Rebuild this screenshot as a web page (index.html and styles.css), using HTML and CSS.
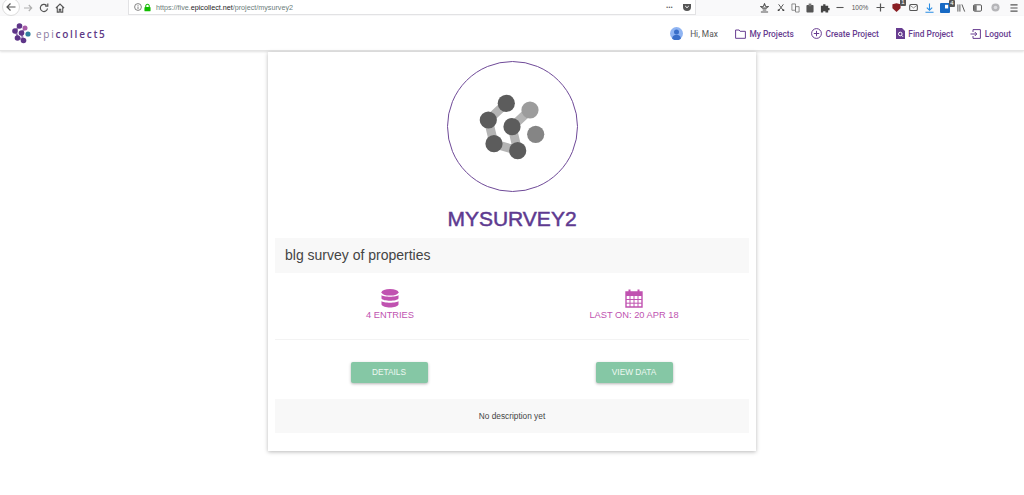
FILE: index.html
```html
<!DOCTYPE html>
<html lang="en">
<head>
<meta charset="utf-8">
<title>MYSURVEY2 - Epicollect5</title>
<link rel="stylesheet" href="styles.css">
</head>
<body>
<div class="browser">
  <div class="browser-nav">
    <span class="back"><svg width="12" height="12" viewBox="0 0 12 12"><path d="M10.500 6H2M5.500 2.500 2 6l3.500 3.500" class="ic"/></svg></span>
    <svg class="fwd" width="10" height="10" viewBox="0 0 10 10"><path d="M1 5h7.500M5.800 2 8.700 5 5.800 8" class="ic faint"/></svg>
    <svg class="reload" width="10" height="10" viewBox="0 0 10 10"><path d="M8.500 5.500A3.600 3.600 0 1 1 7.400 2.300M8.800 .6v2.600H6.200" class="ic"/></svg>
    <svg class="home" width="10" height="10" viewBox="0 0 11 11"><path d="M1 5.500 5.500 1.200 10 5.500M2.500 4.500v5.500h2.200V7h1.600v3h2.200V4.500" class="ic"/></svg>
  </div>
  <div class="urlbar">
    <svg width="8" height="8" viewBox="0 0 8 8"><circle cx="4" cy="4" r="3.400" class="ic thin"/><path d="M4 3.500v2.500M4 2v.8" class="ic thin"/></svg>
    <svg class="lock" width="7" height="9" viewBox="0 0 8 9"><path d="M2 4V2.800a2 2 0 0 1 4 0V4" fill="none" stroke="#12bc00" stroke-width="1.200"/><rect x=".5" y="3.800" width="7" height="5" rx="1" fill="#12bc00"/></svg>
    <span class="url">https://five.<b>epicollect.net</b>/project/mysurvey2</span>
    <span class="url-end">
      <span class="dots">•••</span>
      <svg width="10" height="9" viewBox="0 0 10 9"><path d="M1 1h8v3a4 4 0 0 1-8 0z" fill="#555"/><path d="M3.200 3 5 4.700 6.800 3" fill="none" stroke="#fff"/></svg>
    </span>
  </div>
  <div class="tools">
    <svg width="9" height="10" viewBox="0 0 10 11"><path d="M5 .8 6.200 3.500 9 3.800 7 5.600H3L1 3.800 3.800 3.500zM1 10h8M3 7.700h4" class="ic"/></svg>
    <svg width="8" height="9" viewBox="0 0 10 10"><path d="M2 1 8 9M8 1 2 9" class="ic"/><circle cx="2" cy="8.300" r="1.200" fill="#444"/><circle cx="8" cy="8.300" r="1.200" fill="#444"/></svg>
    <svg width="9" height="10" viewBox="0 0 10 11"><path d="M1 1h4v7H1zM5 4h4v6H5z" class="ic thin"/></svg>
    <svg width="8" height="10" viewBox="0 0 9 11"><rect x=".5" y="2" width="8" height="8.500" rx="1" fill="#555"/><rect x="3" y=".5" width="3" height="3" fill="#777"/></svg>
    <svg width="10" height="10" viewBox="0 0 11 11"><path d="M1 3h2.500V1.500h2.500V3h3v2.500H10.500V8H9v2.500H6V9H3.500v1.500H1z" fill="#444"/></svg>
    <svg width="8" height="9" viewBox="0 0 9 9"><path d="M.5 4.500h8" class="ic"/></svg>
    <span class="zoomv">100%</span>
    <svg width="9" height="9" viewBox="0 0 9 9"><path d="M.5 4.500h8M4.500 .5v8" class="ic"/></svg>
    <span class="badged">
      <svg width="9" height="11" viewBox="0 0 11 12"><path d="M.5 2 5.500 .8 10.500 2v5L5.500 11.500.5 7z" fill="#8a1f24"/></svg>
      <span class="badge">1</span>
    </span>
    <svg width="9" height="7" viewBox="0 0 10 8"><rect x=".6" y=".6" width="8.800" height="6.800" rx="1.500" class="ic"/><path d="M1 1.500 5 4.500 9 1.500" class="ic thin"/></svg>
    <svg width="9" height="10" viewBox="0 0 10 11"><path d="M5 .5v7M2 5l3 3 3-3M.5 10.300h9" fill="none" stroke="#2a8de4" stroke-width="1.200"/></svg>
    <span class="badged">
      <svg width="10" height="10" viewBox="0 0 11 11"><rect width="11" height="11" rx="1" fill="#1769c4"/><rect x="5.500" y="2" width="3.500" height="4" fill="#fff"/></svg>
      <span class="badge">4</span>
    </span>
    <svg width="9" height="8" viewBox="0 0 11 10"><path d="M1 .5v9M3.500 .5v9M6 .5 9.500 9.500" class="ic"/></svg>
    <svg width="9" height="8" viewBox="0 0 11 9"><rect x=".6" y=".6" width="9.800" height="7.800" rx="1.500" class="ic"/><rect x="1" y="1" width="3.500" height="7" fill="#777"/></svg>
    <svg width="9" height="9" viewBox="0 0 10 10"><circle cx="5" cy="5" r="4.500" fill="#b5b5b8"/><circle cx="5" cy="5" r="2" fill="#dcdcdf"/></svg>
    <svg width="8" height="8" viewBox="0 0 9 9"><path d="M.5 1h8M.5 4.500h8M.5 8h8" class="ic"/></svg>
  </div>
</div>

<header class="topnav">
  <a class="brand">
    <svg width="19" height="21" viewBox="0 0 19 21">
      <path d="M7 3 3.500 8 6 14.500 11 17 9.500 10 13 5" fill="none" stroke="#9d7fb8" stroke-width="2"/>
      <circle cx="7.500" cy="3" r="2.800" fill="#5e3588"/>
      <circle cx="13" cy="5" r="2.500" fill="#a75ca8"/>
      <circle cx="3" cy="8" r="2.800" fill="#5e3588"/>
      <circle cx="9.500" cy="10" r="2.800" fill="#5e3588"/>
      <circle cx="16" cy="11" r="2.600" fill="#2f7f9c"/>
      <circle cx="5.500" cy="15" r="2.800" fill="#5e3588"/>
      <circle cx="11.500" cy="17.500" r="2.800" fill="#5e3588"/>
    </svg>
    <span class="wordmark"><span class="epi">epi</span>collect5</span>
  </a>
  <nav class="links">
    <span class="link user">
      <svg width="13" height="13" viewBox="0 0 13 13"><circle cx="6.500" cy="6.500" r="6.500" fill="#8fb4f2"/><circle cx="6.500" cy="5" r="2.500" fill="#3a6fc9"/><path d="M2 11.500a4.600 4.600 0 0 1 9 0 6.500 6.500 0 0 1-9 0z" fill="#3a6fc9"/></svg>
      Hi, Max
    </span>
    <a class="link">
      <svg width="11" height="10" viewBox="0 0 11 10"><path d="M.6 1h3.500l1 1.300h5.300v7H.6z" class="ic purple"/></svg>
      My Projects
    </a>
    <a class="link">
      <svg width="11" height="11" viewBox="0 0 11 11"><circle cx="5.500" cy="5.500" r="4.900" class="ic purple"/><path d="M5.500 2.800v5.400M2.800 5.500h5.400" class="ic purple"/></svg>
      Create Project
    </a>
    <a class="link">
      <svg width="9" height="11" viewBox="0 0 9 11"><path d="M0 0h6l3 3v8H0z" fill="#673c90"/><circle cx="4.300" cy="6" r="1.800" fill="none" stroke="#fff"/><path d="M5.500 7.300 7 8.800" stroke="#fff"/></svg>
      Find Project
    </a>
    <a class="link">
      <svg width="11" height="10" viewBox="0 0 11 10"><path d="M3 3V.6h7.400v8.800H3V7M.5 5h6M4.800 3l2 2-2 2" class="ic purple"/></svg>
      Logout
    </a>
  </nav>
</header>

<main class="card">
  <div class="logo-ring">
    <svg width="110" height="110" viewBox="-55 -55 110 110">
      <path d="M-5.700-23.700-23.700-7-18 16.700 5.700 23.700 0-.3 18-17" fill="none" stroke="#b4b4b4" stroke-width="9" stroke-linejoin="round"/>
      <circle cx="-5.700" cy="-23.700" r="8.600" fill="#5c5c5c"/>
      <circle cx="-23.700" cy="-7" r="8.600" fill="#5c5c5c"/>
      <circle cx="18" cy="-17" r="8.600" fill="#9c9c9c"/>
      <circle cx="0" cy="-.3" r="8.600" fill="#5c5c5c"/>
      <circle cx="23.700" cy="7.300" r="8.600" fill="#858585"/>
      <circle cx="-18" cy="16.700" r="8.600" fill="#5c5c5c"/>
      <circle cx="5.700" cy="23.700" r="8.600" fill="#5c5c5c"/>
    </svg>
  </div>
  <h1 class="title">MYSURVEY2</h1>
  <p class="tagline">blg survey of properties</p>
  <section class="stats">
    <div class="stat">
      <svg width="18" height="19" viewBox="0 0 18 19"><g fill="#c052b0"><ellipse cx="9" cy="3.300" rx="8.500" ry="3.300"/><path d="M.5 6C2 8.300 16 8.300 17.500 6V9.500C16 12.500 2 12.500 .5 9.500zM.5 12C2 14.300 16 14.300 17.500 12V15.500C16 19.500 2 19.500 .5 15.500z"/></g></svg>
      <span>4 ENTRIES</span>
    </div>
    <div class="stat">
      <svg width="18" height="19" viewBox="0 0 18 19"><path d="M1 3h16v15H1z" fill="none" stroke="#c052b0" stroke-width="1.400"/><path d="M1 3h16v4H1z" fill="#c052b0"/><path d="M4.500 .5v4M13.500 .5v4" stroke="#c052b0" stroke-width="2"/><path d="M1 10.500h16M1 14.200h16M5 7v11M9 7v11M13 7v11" stroke="#c052b0"/></svg>
      <span>LAST ON: 20 APR 18</span>
    </div>
  </section>
  <hr class="divider">
  <section class="actions">
    <a class="btn btn-first">DETAILS</a>
    <a class="btn">VIEW DATA</a>
  </section>
  <p class="description">No description yet</p>
</main>
</body>
</html>
```

FILE: styles.css
```css
* { box-sizing: border-box; }
html, body { margin: 0; padding: 0; }
body {
  background: #fff;
  font-family: "Liberation Sans", Arial, sans-serif;
  color: #444;
  height: 495px;
  overflow: hidden;
}
.ic { fill: none; stroke: #555; stroke-width: 1.200; }
.ic.thin { stroke-width: .8; stroke: #666; }
.ic.faint { stroke: #b0b0b0; }
.ic.purple { stroke: #673c90; stroke-width: 1; }

.browser {
  height: 16px;
  background: #f9f9fa;
  display: flex;
  align-items: flex-start;
}
.browser-nav {
  width: 128px;
  display: flex;
  align-items: center;
  height: 15px;
}
.back {
  width: 18px;
  height: 18px;
  margin: -2px 0 0 2px;
  border-radius: 50%;
  background: #fff;
  border: 1px solid #ddd;
  display: flex;
  align-items: center;
  justify-content: center;
  flex: none;
}
.fwd { margin-left: 3px; }
.reload { margin-left: 6px; }
.home { margin-left: 6px; }
.urlbar {
  width: 568px;
  height: 15px;
  background: #fff;
  border: 1px solid #e2e2e4;
  border-top: 0;
  display: flex;
  align-items: center;
  gap: 2px;
  padding: 0 2px 0 5px;
}
.url { font-size: 7.200px; color: #6b7d7a; margin-left: 3px; white-space: nowrap; }
.url b { font-weight: 400; color: #222; }
.url-end { margin-left: auto; display: flex; align-items: center; gap: 9px; padding-right: 1px; }
.dots { font-size: 5px; color: #555; letter-spacing: .5px; }
.tools {
  margin-left: 60px;
  display: grid;
  grid-template-columns: 17px 15px 14px 15px 16px 14px 26px 15px 17px 16px 16px 16px 16px 17px 18px 20px;
  justify-items: center;
  align-items: center;
  height: 15px;
}
.zoomv { font-size: 6.500px; color: #555; }
.badged { position: relative; display: flex; }
.badge {
  position: absolute;
  top: -3px;
  right: -5px;
  background: #555;
  color: #fff;
  font-size: 6px;
  line-height: 7px;
  padding: 0 1.500px;
  border-radius: 1px;
}

.topnav {
  height: 35px;
  background: #fff;
  border-bottom: 1px solid #e5e5e5;
  box-shadow: 0 1px 2px rgba(0,0,0,.12);
  display: flex;
  align-items: center;
  justify-content: space-between;
  padding: 1px 13px 0 12px;
}
.brand { display: flex; align-items: center; gap: 5px; }
.wordmark {
  font-family: "Open Sans", sans-serif;
  font-size: 10px;
  font-weight: 600;
  letter-spacing: 1.750px;
  color: #5e3a86;
}
.epi { color: #8a7a9e; font-weight: 400; }
.links { display: flex; align-items: center; gap: 17px; }
.link {
  display: flex;
  align-items: center;
  gap: 3.500px;
  font-size: 8.400px;
  font-weight: 500;
  font-family: Roboto, sans-serif;
  color: #673c90;
  white-space: nowrap;
}
.link.user { color: #555; gap: 7px; font-weight: 400; }

.card {
  width: 488px;
  height: 399px;
  margin: 1px auto 0;
  background: #fff;
  box-shadow: 0 1px 4px rgba(0,0,0,.28);
  padding: 9px 0 0;
  display: flex;
  flex-direction: column;
  align-items: stretch;
}
.logo-ring {
  width: 131px;
  height: 131px;
  border: 1px solid #6f4a98;
  border-radius: 50%;
  align-self: center;
  flex: none;
  display: flex;
  align-items: center;
  justify-content: center;
}
.title {
  margin: 14px 0 0;
  font-size: 21px;
  line-height: 26px;
  font-weight: 500;
  text-align: center;
  color: #5e3a90;
  -webkit-text-stroke: .5px #5e3a90;
}
.tagline {
  margin: 6px 7px 0;
  height: 35px;
  background: #f8f8f8;
  padding: 0 10px;
  font-size: 14px;
  line-height: 35px;
  color: #444;
}
.stats {
  display: grid;
  grid-template-columns: 1fr 1fr;
  height: 66px;
  padding-top: 16px;
}
.stat {
  display: flex;
  flex-direction: column;
  align-items: center;
  gap: 1px;
  font-size: 9.300px;
  line-height: 13px;
  color: #c052b0;
}
.stat svg { flex: none; }
.divider {
  height: 1px;
  margin: 0 7px;
  border: 0;
  background: #f3f3f3;
}
.actions {
  display: grid;
  grid-template-columns: 1fr 1fr;
  justify-items: center;
  padding-top: 22px;
}
.btn {
  width: 77px;
  height: 21px;
  background: #85c7a5;
  color: #eef8f2;
  font-size: 8.300px;
  line-height: 21px;
  text-align: center;
  border-radius: 2px;
  box-shadow: 0 1px 3px rgba(0,0,0,.3);
}
.btn-first { margin-right: 2px; }
.description {
  margin: 16px 7px 0;
  height: 34px;
  background: #f8f8f8;
  font-size: 8.300px;
  line-height: 34px;
  text-align: center;
  color: #444;
}
```
